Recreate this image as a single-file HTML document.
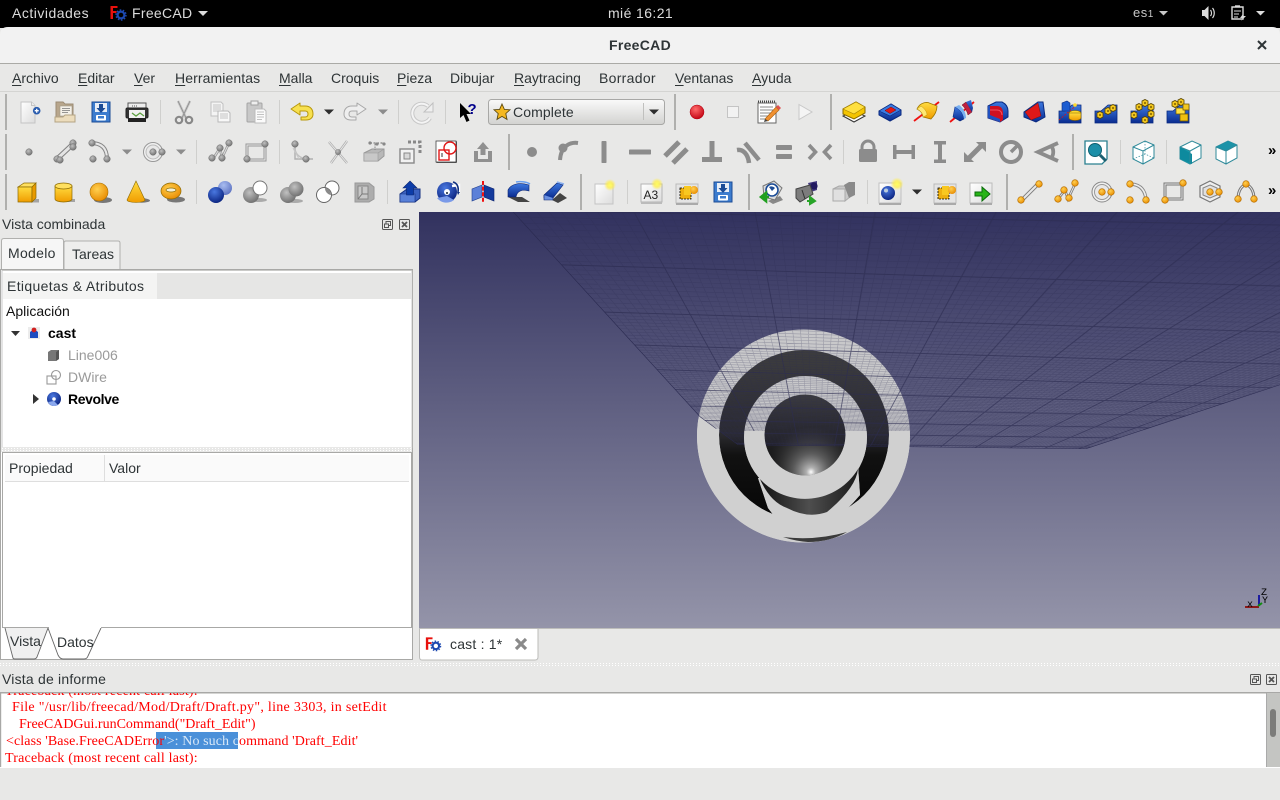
<!DOCTYPE html>
<html lang="es"><head><meta charset="utf-8"><title>FreeCAD</title>
<style>
html,body{margin:0;padding:0;width:1280px;height:800px;overflow:hidden;background:#e8e8e7}
body{position:relative;font-family:"Liberation Sans",sans-serif;font-size:14px;color:#2e3436}
svg#g{position:absolute;left:0;top:0}
.t{position:absolute;line-height:20px;white-space:nowrap}
.w{color:#dcdcdc}
.m u{text-decoration-thickness:1px;text-underline-offset:2px}
.r{position:absolute;font-family:"Liberation Serif",serif;font-size:14px;line-height:17px;color:#f00;white-space:pre}
.b{position:absolute}
</style></head><body>
<div class="b" style="left:0;top:692px;width:1266px;height:75px;background:#fff"></div>
<svg id="g" width="1280" height="800" viewBox="0 0 1280 800" xmlns="http://www.w3.org/2000/svg">
<defs>
<linearGradient id="bg" x1="0" y1="0" x2="0" y2="1"><stop offset="0" stop-color="#32325f"/><stop offset="1" stop-color="#9494a9"/></linearGradient>
<linearGradient id="au" x1="0" y1="0" x2="0" y2="1"><stop offset="0" stop-color="#ffdc40"/><stop offset="1" stop-color="#f09c00"/></linearGradient>
<linearGradient id="bl" x1="0" y1="0" x2="0" y2="1"><stop offset="0" stop-color="#3c78e0"/><stop offset="1" stop-color="#0a2c90"/></linearGradient>
<linearGradient id="pp" x1="0" y1="0" x2="1" y2="1"><stop offset="0" stop-color="#fff"/><stop offset="1" stop-color="#dcdcdc"/></linearGradient>
<radialGradient id="gb" cx=".4" cy=".35" r=".7"><stop offset="0" stop-color="#c0c0c0"/><stop offset="1" stop-color="#6c6c6c"/></radialGradient>
<radialGradient id="ob" cx=".4" cy=".35" r=".7"><stop offset="0" stop-color="#ffd050"/><stop offset="1" stop-color="#e88a00"/></radialGradient>
<radialGradient id="bb" cx=".4" cy=".3" r=".75"><stop offset="0" stop-color="#4a78e0"/><stop offset="1" stop-color="#08207c"/></radialGradient>
<radialGradient id="lb" cx=".4" cy=".3" r=".75"><stop offset="0" stop-color="#a8bcf0"/><stop offset="1" stop-color="#5a70c0"/></radialGradient>
<radialGradient id="rd" cx=".4" cy=".3" r=".75"><stop offset="0" stop-color="#ff6a6a"/><stop offset="1" stop-color="#c00010"/></radialGradient>
<radialGradient id="sg" cx=".5" cy=".5" r=".5"><stop offset="0" stop-color="#ffff60"/><stop offset=".5" stop-color="#ffee50" stop-opacity=".8"/><stop offset="1" stop-color="#ffee50" stop-opacity="0"/></radialGradient>
<radialGradient id="gs" gradientUnits="userSpaceOnUse" cx="811" cy="472" r="46"><stop offset="0" stop-color="#fff"/><stop offset=".1" stop-color="#ccc" stop-opacity=".85"/><stop offset=".4" stop-color="#888" stop-opacity=".6"/><stop offset="1" stop-color="#444" stop-opacity="0"/></radialGradient>
<linearGradient id="sp0" x1="0" y1="0" x2="0" y2="1"><stop offset="0" stop-color="#3c3c3e"/><stop offset=".5" stop-color="#262628"/><stop offset="1" stop-color="#0a0a0a"/></linearGradient>
<linearGradient id="sa" x1="0" y1="0" x2="0" y2="1"><stop offset="0" stop-color="#3e3e3e"/><stop offset=".5" stop-color="#2a2a2e"/><stop offset=".62" stop-color="#111"/><stop offset="1" stop-color="#060606"/></linearGradient>
<linearGradient id="cr" x1="0" y1="0" x2="1" y2="0"><stop offset="0" stop-color="#111"/><stop offset=".5" stop-color="#4e4e4e"/><stop offset="1" stop-color="#1a1a1a"/></linearGradient>
<linearGradient id="cb" x1="0" y1="0" x2="0" y2="1"><stop offset="0" stop-color="#fafafa"/><stop offset="1" stop-color="#d2d2d0"/></linearGradient>
<clipPath id="pl"><path d="M513,212L700,417L738,445L1086,449L1280,385V212Z"/></clipPath>
<clipPath id="lo"><path d="M690,412L708,428L743,431H915V550H690Z"/></clipPath>
<clipPath id="vp"><rect x="419" y="212" width="861" height="416"/></clipPath>

<!-- helpers -->
<circle id="b" r="3.3" fill="url(#gb)" stroke="#777" stroke-width=".5"/>
<circle id="o" r="3.3" fill="url(#ob)" stroke="#b06a00" stroke-width=".6"/>
<path id="dd" d="M-5,-2.5H5L0,2.5Z" fill="#2e2e2e"/>
<path id="dg" d="M-5,-2.5H5L0,2.5Z" fill="#8c8c8c"/>
<g id="fc"><path d="M-7.5,-7H-.5V-5H-5V-2H-1.5V0H-5V6H-7.5Z" fill="#e8100c"/><circle cx="3" cy="2" r="3.4" fill="none" stroke="#1c48b0" stroke-width="2.2"/><circle cx="3" cy="2" r="5" fill="none" stroke="#1c48b0" stroke-width="1.4" stroke-dasharray="1.6 1.55"/></g>

<!-- row1 -->
<g id="new"><path d="M-9,-10H1.5L5,-6.5V11H-9Z" fill="url(#pp)" stroke="#c4c4c4"/><path d="M1.5,-10V-6.5H5" fill="#eee" stroke="#c4c4c4"/><circle cx="6.7" cy="-1.3" r="3.8" fill="#2a5cae"/><path d="M4.7,-1.3H8.7M6.7,-3.3V.7" stroke="#fff" stroke-width="1.3"/></g>
<g id="open"><path d="M-9,-10H-2L0,-8H8V9H-9Z" fill="#b8a68c" stroke="#9c8c74"/><rect x="-5" y="-6" width="12" height="10" fill="#f4f0e8" stroke="#a09888" stroke-width=".6"/><path d="M-3,-3.5H5M-3,-1.5H5M-3,.5H3" stroke="#777" stroke-width=".8"/><path d="M-10,5H-2L0,3H10V10H-10Z" fill="#ecdcbc" stroke="#b4a484"/></g>
<g id="save"><path d="M-9,-10H9V10H-9Z" fill="#3c7cce" stroke="#1c4c96"/><rect x="-6" y="-9" width="12" height="9" fill="#e8eef6"/><path d="M-2,-8H2V-4H4.5L0,1L-4.5,-4H-2Z" fill="#1c4c96"/><rect x="-5" y="3" width="10" height="5.5" rx="1" fill="#fff"/><rect x="-3" y="4" width="6" height="2.5" fill="#3c7cce"/></g>
<g id="print"><rect x="-9" y="-9" width="18" height="6" fill="#eee" stroke="#555"/><path d="M-5,-6H1" stroke="#555" stroke-dasharray="1 1"/><rect x="-11" y="-4" width="22" height="10" rx="1.5" fill="#333" stroke="#222"/><rect x="-8" y="-2" width="16" height="8" fill="#f0f0f0"/><path d="M-5,1L-1,4L3,1L7,4" stroke="#5ca040" fill="none" stroke-width="1.3"/><rect x="-9" y="6" width="18" height="4" fill="#222"/></g>
<g id="cut" fill="none" stroke="#a6a6a6"><path d="M-6,-12L2,5M6,-12L-2,5" stroke-width="2.4" stroke="#c0c0c0"/><path d="M-6,-12L2,5M6,-12L-2,5" stroke-width=".6" stroke="#808080"/><circle cx="-5" cy="7" r="3.2" stroke-width="2.2" stroke="#888"/><circle cx="5" cy="7" r="3.2" stroke-width="2.2" stroke="#888"/></g>
<g id="copy"><path d="M-9,-10H1L3,-8V4H-9Z" fill="#f4f4f4" stroke="#c0c0c0"/><path d="M-7,-7H1M-7,-5H1M-7,-3H1M-7,-1H-1" stroke="#b4b4b4" stroke-width=".8"/><path d="M-2,-1H8L10,1V10H-2Z" fill="#f8f8f8" stroke="#b8b8b8"/><path d="M0,2H8M0,4H8M0,6H8" stroke="#b4b4b4" stroke-width=".8"/></g>
<g id="paste"><rect x="-9" y="-9" width="15" height="19" rx="1" fill="#c8c8c8" stroke="#a4a4a4"/><rect x="-5" y="-11" width="7" height="4" fill="#eee" stroke="#a0a0a0"/><path d="M-1,-3H8L10,-1V11H-1Z" fill="#fbfbfb" stroke="#bcbcbc"/><path d="M1,0H8M1,2.5H8M1,5H8M1,7.5H6" stroke="#b0b0b0" stroke-width=".8"/></g>
<path id="undo" d="M-11,-3L-2,-9V-6H3C9,-6 11,-2 11,2C11,6 8,8 4,8H-1V5H3C5,5 6,4 6,2C6,0 5,-1 3,-1H-2V3Z" fill="#f7e050" stroke="#b8980c" stroke-linejoin="round"/>
<path id="redo" d="M11,-3L2,-9V-6H-3C-9,-6 -11,-2 -11,2C-11,6 -8,8 -4,8H1V5H-3C-5,5 -6,4 -6,2C-6,0 -5,-1 -3,-1H2V3Z" fill="#eee" stroke="#a8a8a8" stroke-linejoin="round"/>
<g id="refresh"><path d="M8,5A9.5,9.5 0 1 1 6,-7" fill="none" stroke="#c8c8c8" stroke-width="4"/><path d="M8,5A9.5,9.5 0 1 1 6,-7" fill="none" stroke="#f4f4f4" stroke-width="2"/><path d="M2,-1H11V-10Z" fill="#efefef" stroke="#c0c0c0"/></g>
<g id="wt"><path d="M-9,-9V6L-5.5,3L-2.5,10L0.5,8.5L-2.5,2H2Z" fill="#000"/><text x="-1.5" y="2" font-family="Liberation Sans" font-weight="700" font-size="15" fill="#00008b">?</text></g>
<path id="star" d="M0,-8L2.4,-2.6L8,-2.2L3.8,1.6L5,7.4L0,4.4L-5,7.4L-3.8,1.6L-8,-2.2L-2.4,-2.6Z" fill="#f4b820" stroke="#5c4a10" stroke-width=".9"/>
<circle id="rec" r="7" fill="url(#rd)" stroke="#b00010" stroke-width=".5"/>
<rect id="stp" x="-5.5" y="-5.5" width="11" height="11" fill="#f2f2f2" stroke="#c4c4c4"/>
<g id="mac"><rect x="-10" y="-9" width="18" height="20" fill="#fff" stroke="#666"/><path d="M-10,-10.5H8" stroke="#444" stroke-width="2" stroke-dasharray="1 1"/><path d="M-8,-5H5M-8,-2H5M-8,1H4M-8,4H1M-8,7H-2" stroke="#888" stroke-width=".9"/><path d="M-3,7L8,-5L11,-2L0,9Z" fill="#f09030" stroke="#a86010" stroke-width=".6"/><path d="M8,-5L10,-7L13,-4L11,-2Z" fill="#e05050"/><path d="M-3,7L-4,10L0,9Z" fill="#444"/></g>
<path id="play" d="M-6,-7.5L7,0L-6,7.5Z" fill="#f4f4f4" stroke="#c8c8c8"/>

<!-- part design row 1 -->
<g id="pd1"><path d="M-11,4L0,10L11,4L0,-1Z" fill="#fff" stroke="#333"/><path d="M-11,-3L2,-10L11,-5V1L0,7L-11,2Z" fill="#f4c400" stroke="#8a6c00"/><path d="M-11,-3L0,2L11,-5L2,-10Z" fill="#ffe040" stroke="#a88400" stroke-width=".6"/></g>
<g id="pd2"><path d="M-11,-1L1,-8L11,-2V3L0,9L-11,3Z" fill="url(#bl)" stroke="#0a2a80"/><path d="M-11,-1L0,4L11,-2L1,-8Z" fill="#3a7ae0" stroke="#0a2a80" stroke-width=".6"/><path d="M-5,-1.5L1,-5L6,-2L0,1.5Z" fill="#e01818" stroke="#701010" stroke-width=".5"/></g>
<g id="pd3"><path d="M-12,9L13,-10" stroke="#f01010" stroke-width="1.8"/><path d="M-9,-3C-7,-8 -2,-10 2,-9.500L11,-6C11,-1 9,3 5,7L-3,5C-3,2 -5,-1 -9,-3Z" fill="url(#au)" stroke="#9c7400" stroke-width=".8"/><path d="M-9,-3C-5,-1 -3,2 -3,5L1,3C1,0 -1,-3 -5,-6Z" fill="#ffe874" stroke="#b08c00" stroke-width=".4"/></g>
<g id="pd4"><path d="M-12,10L12,-10" stroke="#f01010" stroke-width="1.8"/><path d="M-7,-5C-3,-3 1,0 2,7L-2,9L-9,5Z" fill="url(#bl)" stroke="#0a2a80" stroke-width=".6"/><path d="M-7,-5L-3,-7C1,-4 4,0 4,6L2,7C1,0 -3,-3 -7,-5Z" fill="#7ab0f0"/><path d="M0,-7C3,-4 5,-1 6,3L10,0C8,-4 6,-7 4,-10Z" fill="#c02040" stroke="#601020" stroke-width=".5"/><path d="M4,-10L9,-12L11,-4L10,0Z" fill="url(#bl)"/></g>
<g id="pd5"><path d="M-10,-6L-2,-10H4C8,-8 10,-5 10,-1V5L2,10L-10,6Z" fill="url(#bl)" stroke="#0a2a80"/><path d="M-10,-6H-1C3,-6 5,-3 5,1V8L2,10L-10,6Z" fill="#d01020"/><path d="M-10,-6V6L2,10V7L-8,3V-6Z" fill="#2050c0"/><path d="M-8,-2H-1C2,-2 4,0 4,3" stroke="#f05060" fill="none"/></g>
<g id="pd6"><path d="M-10,0L4,-10H9L11,5L2,10L-10,5Z" fill="url(#bl)" stroke="#0a2a80"/><path d="M-9,0L4,-9L7,4L-3,8Z" fill="#e01818" stroke="#801010" stroke-width=".5"/></g>
<g id="pdb"><path d="M-11,-1H-5L2,-7H11V11H-11Z" fill="url(#bl)" stroke="#0a2a80" stroke-width=".8"/></g>
<g id="nut"><path d="M-3,-2L0,-3.5L3,-2V2L0,3.5L-3,2Z" fill="#f4c820" stroke="#584400" stroke-width=".8"/><circle r="1" fill="#7c6000"/></g>
<g id="pd7"><use href="#pdb"/><path d="M-8,-1V-9L-3,-11L0,-9V-1Z" fill="#1c5cd0" stroke="#0a2a80" stroke-width=".6"/><ellipse cx="5" cy="1" rx="6" ry="2.5" fill="#ffd82c" stroke="#7a6000" stroke-width=".6"/><path d="M-1,1V6A6,2.5 0 0 0 11,6V1Z" fill="url(#au)" stroke="#7a6000" stroke-width=".6"/><path d="M-11,8L8,-8" stroke="#e01010" stroke-dasharray="2 1.5" stroke-width=".8"/><circle cx="5" cy="-7" r="1.8" fill="#ffd82c"/></g>
<g id="pd8"><use href="#pdb"/><use href="#nut" x="-6" y="3"/><use href="#nut" x="2" y="-1"/><use href="#nut" x="7" y="-4"/></g>
<g id="pd9"><use href="#pdb"/><use href="#nut" x="-8" y="3"/><use href="#nut" x="-3" y="-5"/><use href="#nut" x="3" y="-9"/><use href="#nut" x="9" y="-5"/><use href="#nut" x="9" y="2"/><use href="#nut" x="3" y="8"/></g>
<g id="pd10"><use href="#pdb"/><use href="#nut" x="-3" y="-8"/><use href="#nut" x="3" y="-10"/><path d="M-2,-4H7V2H-2Z" fill="#ffe040" stroke="#6c5400" stroke-width=".7"/><path d="M2,2H10V9H2Z" fill="#f0c010" stroke="#6c5400" stroke-width=".7"/><path d="M5,-8H11V-2H5Z" fill="#f4c820" stroke="#6c5400" stroke-width=".7"/></g>

<!-- sketcher gray -->
<g id="s1"><path d="M-8,7L7,-7" stroke="#808080" stroke-width="5"/><path d="M-8,7L7,-7" stroke="#e4e4e4" stroke-width="3"/><use href="#b" x="-8" y="7"/><use href="#b" x="8" y="-9"/><use href="#b" x="8" y="-5"/><use href="#b" x="-5" y="8"/></g>
<g id="s2"><path d="M-9,-9Q7,-9 7,7" fill="none" stroke="#888" stroke-width="4"/><path d="M-9,-9Q7,-9 7,7" fill="none" stroke="#e8e8e8" stroke-width="2"/><use href="#b" x="-8" y="-9"/><use href="#b" x="-7" y="7"/><use href="#b" x="7" y="7"/></g>
<g id="s3"><circle r="9.5" fill="#f0f0f0" stroke="#999"/><circle r="7" fill="#e8e8e8" stroke="#bbb"/><use href="#b" x="0" y="0"/><use href="#b" x="9" y="0"/></g>
<g id="s4"><path d="M-7,7L0,-4L2,6L9,-9" fill="none" stroke="#999" stroke-width="2.6"/><path d="M-7,7L0,-4L2,6L9,-9" fill="none" stroke="#ddd" stroke-width="1"/><use href="#b" x="-8" y="6"/><use href="#b" x="0" y="-4"/><use href="#b" x="2" y="6"/><use href="#b" x="9" y="-9"/></g>
<g id="s5"><rect x="-9" y="-7" width="18" height="15" fill="none" stroke="#999" stroke-width="3"/><rect x="-9" y="-7" width="18" height="15" fill="none" stroke="#e8e8e8" stroke-width="1"/><use href="#b" x="9" y="-8"/><use href="#b" x="-9" y="7"/></g>
<g id="s6"><path d="M-7,-9V7H11" fill="none" stroke="#b0b0b0" stroke-width="1.4"/><path d="M-7,-3Q-6,5 4,7" fill="none" stroke="#c0c0c0" stroke-width="1.4"/><use href="#b" x="-7" y="-8"/><use href="#b" x="4" y="7"/><path d="M-9,-4L-3,7" stroke="#c8c8c8"/></g>
<g id="s7"><path d="M-9,-10L9,11M9,-11L-7,11" stroke="#b0b0b0" stroke-width="2.4"/><path d="M-9,-10L9,11M9,-11L-7,11" stroke="#eee" stroke-width=".8"/><circle cy="0" r="3" fill="url(#gb)"/></g>
<g id="s8"><path d="M-10,1L-2,-3H10V4L4,9H-10Z" fill="#b8b8b8" stroke="#999"/><path d="M-10,1H4V9H-10ZM4,1L10,-3" fill="#c8c8c8" stroke="#999" stroke-width=".6"/><path d="M-4,-9H10" stroke="#666" stroke-width="1" stroke-dasharray="2 1.5"/><circle cx="-4" cy="-9" r="1.6" fill="#888"/><circle cx="3" cy="-8" r="1.6" fill="#888"/><circle cx="10" cy="-8" r="1.6" fill="#888"/><path d="M1,-8V-2" stroke="#888" stroke-dasharray="1.5 1"/></g>
<g id="s9"><rect x="-11" y="-3" width="14" height="14" fill="#f2f2f2" stroke="#888" stroke-width="1.4"/><rect x="-7" y="1" width="6" height="6" fill="#d8d8d8" stroke="#888"/><path d="M-3,-10H9V3" fill="none" stroke="#888" stroke-width="3" stroke-dasharray="3 2"/></g>
<g id="s10"><rect x="-11" y="-11" width="21" height="22" rx="1" fill="#555"/><rect x="-11" y="-11" width="20" height="21" fill="#fff" stroke="#444" stroke-width=".8"/><circle cx="3" cy="-4" r="6" fill="none" stroke="#e01818" stroke-width="1.4"/><rect x="-8" y="-2" width="10" height="10" fill="none" stroke="#e01818" stroke-width="1.4"/><path d="M-5,1V5" stroke="#999" stroke-width="2"/></g>
<path id="s11" d="M0,-10L6,-3H2.5V3H-2.5V-3H-6ZM-9,-1H-5V7H5V-1H9V10H-9Z" fill="#909090"/>
<!-- constraints -->
<circle id="c1" r="5" fill="#8c8c8c"/>
<g id="c2"><path d="M10,-9C3,-10 -7,-7 -8,8" fill="none" stroke="#8c8c8c" stroke-width="4"/><circle cx="-5" cy="-4" r="4.5" fill="#8c8c8c"/></g>
<rect id="c3" x="-2.5" y="-11" width="5" height="22" rx=".8" fill="#8c8c8c"/>
<rect id="c4" x="-11" y="-2.5" width="22" height="5" rx=".8" fill="#8c8c8c"/>
<g id="c5b" stroke="#8c8c8c" stroke-width="5"><path d="M-11,4L3,-10M-3,11L11,-3"/></g>
<path id="c6" d="M-2.5,-11H2.5V5H10V10H-10V5H-2.5Z" fill="#8c8c8c"/>
<g id="c7" fill="none" stroke="#8c8c8c" stroke-width="4.5"><path d="M-3,-9L11,8"/><path d="M-11,-2C-5,-3 0,2 1,11"/></g>
<g id="c8" fill="#8c8c8c"><rect x="-8" y="-7" width="16" height="5" rx="1"/><rect x="-8" y="2" width="16" height="5" rx="1"/></g>
<g id="c9" fill="none" stroke="#8c8c8c" stroke-width="3.6"><path d="M-11,-7L-4.500,0L-11,7M11,-7L4.500,0L11,7"/></g>
<g id="c10"><path d="M-6,-3V-5A6,6 0 0 1 6,-5V-3" fill="none" stroke="#8c8c8c" stroke-width="3"/><rect x="-9" y="-3" width="18" height="13" rx="1.5" fill="#8c8c8c"/></g>
<g id="c11" fill="#8c8c8c"><rect x="-11" y="-7" width="3.5" height="14"/><rect x="7.5" y="-7" width="3.5" height="14"/><rect x="-8" y="-2" width="16" height="4"/></g>
<g id="c12" fill="#8c8c8c"><rect x="-6" y="-11" width="12" height="3.5"/><rect x="-6" y="7.5" width="12" height="3.5"/><rect x="-2" y="-8" width="4" height="16"/></g>
<g id="c13"><path d="M-6,6L6,-6" stroke="#8c8c8c" stroke-width="5"/><path d="M11,-10V0L1,-10ZM-11,10V0L-1,10Z" fill="#8c8c8c"/></g>
<g id="c14"><circle r="10" fill="none" stroke="#8c8c8c" stroke-width="4"/><path d="M0,0L6,-6" stroke="#8c8c8c" stroke-width="3.5"/></g>
<g id="c15" fill="none" stroke="#8c8c8c" stroke-width="3.8"><path d="M11,-9L-9,0L11,9"/><path d="M4,-6C7,-3 7,3 4,6"/></g>
<!-- draft view / teal -->
<g id="v1"><path d="M-11,-11H11V7L6,12H-11Z" fill="#fff" stroke="#2a8090" stroke-width="1.3"/><circle cx="-1" cy="-2" r="6.5" fill="#1c8fa8" stroke="#106070"/><path d="M4,3L10,9" stroke="#1c6070" stroke-width="3"/></g>
<g id="wc" fill="none" stroke="#2f8a9a"><path d="M-10,-5L2,-11L11,-7V6L0,12L-10,7Z" fill="#fff"/><path d="M-10,-5L0,-1L11,-7M0,-1V12" /><path d="M2,-11V2M-10,7L2,2L11,6" stroke-dasharray="1.5 1.5" stroke-width=".7"/></g>
<g id="v3"><path d="M-10,-5L2,-11L11,-7V6L0,12L-10,7Z" fill="#fff" stroke="#2f8a9a"/><path d="M-10,-5L0,-1V12L-10,7Z" fill="#149cae"/><path d="M-10,-5L2,2V12L-10,7Z" fill="#0e8a9e"/><path d="M0,-1L11,-7M0,-1V12" stroke="#2f8a9a" fill="none"/><path d="M-10,-5L0,-1" stroke="#2f8a9a"/></g>
<g id="v4"><path d="M-10,-5L2,-11L11,-7V6L0,12L-10,7Z" fill="#fff" stroke="#2f8a9a"/><path d="M-10,-5L2,-11L11,-7L0,-1Z" fill="#1c93a8"/><path d="M0,-1V12M0,-1L11,-7M-10,-5L0,-1" stroke="#2f8a9a" fill="none"/></g>
<!-- row 3 -->
<g id="p1"><rect x="-5" y="7" width="16" height="3.5" fill="#888" opacity=".7"/><path d="M-10,-5L-4,-9H8L4,-5Z" fill="#ffe060" stroke="#8c6a00" stroke-width=".7"/><path d="M-10,-5H4V10H-10Z" fill="url(#au)" stroke="#8c6a00" stroke-width=".7"/><path d="M4,-5L8,-9V6L4,10Z" fill="#e89a00" stroke="#8c6a00" stroke-width=".7"/></g>
<g id="p2"><rect x="-1" y="7" width="12" height="3" fill="#888" opacity=".7"/><path d="M-9,-6V7A8.5,3 0 0 0 8,7V-6Z" fill="url(#au)" stroke="#8c6a00" stroke-width=".7"/><ellipse cx="-.5" cy="-6" rx="8.5" ry="3" fill="#ffe060" stroke="#8c6a00" stroke-width=".7"/></g>
<g id="p3"><ellipse cx="3" cy="8" rx="9" ry="3" fill="#777"/><circle cx="-1" r="9" fill="url(#ob)" stroke="#a87000" stroke-width=".6"/></g>
<g id="p4"><ellipse cx="6" cy="8.5" rx="8" ry="2.2" fill="#777"/><path d="M0,-11L9,8A9,2.5 0 0 1 -9,8Z" fill="url(#au)" stroke="#8c6a00" stroke-width=".6"/></g>
<g id="p5"><ellipse cx="4" cy="7.5" rx="9" ry="3" fill="#777"/><ellipse cx="-1" cy="-1" rx="10" ry="8" fill="url(#ob)" stroke="#8c6a00" stroke-width=".7"/><ellipse cx="-1" cy="-2" rx="5" ry="2" fill="#f4f0d8" stroke="#8c6a00" stroke-width=".7"/></g>
<g id="q1"><circle cx="5" cy="-4" r="7" fill="url(#lb)"/><circle cx="-4" cy="3" r="8" fill="url(#bb)"/></g>
<g id="q2"><ellipse cx="3" cy="8" rx="8" ry="2" fill="#aaa"/><circle cx="-5" cy="3" r="8" fill="url(#gb)"/><circle cx="4" cy="-4" r="7" fill="#fff" stroke="#777"/></g>
<g id="q3"><ellipse cx="3" cy="9" rx="8" ry="2" fill="#aaa"/><circle cx="-4" cy="3" r="8" fill="url(#gb)"/><circle cx="4" cy="-3" r="7.5" fill="url(#gb)"/></g>
<g id="q4"><circle cx="4" cy="-4" r="7" fill="#fff" stroke="#666"/><circle cx="-4" cy="3" r="7.5" fill="#fff" stroke="#666"/><path d="M-3,-4A7,7 0 0 1 3,3 7,7 0 0 1 -3,-4Z" fill="#8a8a8a"/></g>
<g id="q5"><path d="M-9,-9L5,-9L10,-5V7L5,10H-9Z" fill="#adadad" stroke="#999"/><rect x="-6" y="-6" width="10" height="13" fill="#c8c8c8" stroke="#888"/><path d="M-2,-5V2H4M-2,2L-6,7" stroke="#777" fill="none"/></g>
<g id="e1"><path d="M-10,2L-3,-3H10V6L5,10H-10Z" fill="#3c62c0" stroke="#143080"/><path d="M-10,2H5V10H-10Z" fill="#5880d8" stroke="#143080" stroke-width=".6"/><path d="M0,-11L7,-4H3.5V3H-3.5V-4H-7Z" fill="#0c3ca8" stroke="#082470" stroke-width=".6"/></g>
<g id="e2"><circle r="10" fill="url(#bb)"/><path d="M-10,6A12,12 0 0 0 7,8L0,4Z" fill="#7a9ae8"/><circle cx="0" cy="0" r="3" fill="#fff"/><circle cx="0" cy="1" r="1" fill="#123"/><path d="M5,-6L12,-7V2" fill="none" stroke="#fff" stroke-width="2.4"/><path d="M6,-10C10,-9 12,-5 11,0" fill="none" stroke="#103080" stroke-width="1.6"/><path d="M10,0H13L11,3Z" fill="#103080"/></g>
<g id="e3"><path d="M-1,-7L-11,-3V9L-1,5Z" fill="#5c80d8" stroke="#204090" stroke-width=".6"/><path d="M1,-7L11,-3V9L1,5Z" fill="#143a9c" stroke="#0c2470" stroke-width=".6"/><path d="M0,-11V11" stroke="#f01010" stroke-width="2" stroke-dasharray="4 1.6"/></g>
<g id="e4"><path d="M-11,5L3,5L11,10H-1Z" fill="#444"/><path d="M-11,-2C-8,-8 0,-10 10,-7V-1C3,-3 -2,-1 -3,5H-11Z" fill="url(#bl)" stroke="#0c2470" stroke-width=".6"/><path d="M-3,-10C2,-11 8,-10 11,-8" stroke="#6aa0f0" fill="none" stroke-width="1.5"/></g>
<g id="e5"><path d="M-3,8L5,1L12,6L3,11Z" fill="#444"/><path d="M-11,3L2,-9L8,-7L-2,6H-11Z" fill="url(#bl)" stroke="#0c2470" stroke-width=".6"/><path d="M2,-10L9,-8" stroke="#8ab0f0" stroke-width="1.5"/><path d="M-11,3V8H-2V6" fill="#6a90e0" stroke="#0c2470" stroke-width=".6"/></g>
<g id="k1"><rect x="-9" y="-8" width="18" height="20" fill="url(#pp)" stroke="#c4c4c4"/><circle cx="6" cy="-7" r="6" fill="url(#sg)"/></g>
<g id="k2"><rect x="-10" y="-8" width="21" height="18" fill="url(#pp)" stroke="#b4b4b4"/><rect x="-10" y="10" width="21" height="2" fill="#bbb"/><text x="-7.5" y="7" font-family="Liberation Sans" font-size="12" fill="#222">A3</text><circle cx="6" cy="-8" r="6" fill="url(#sg)"/></g>
<g id="k3"><rect x="-11" y="-8" width="22" height="19" fill="#e4e4e4" stroke="#bbb"/><rect x="-11" y="11" width="22" height="2" fill="#aaa"/><rect x="-7" y="-4" width="11" height="11" fill="#eeb010" stroke="#000" stroke-dasharray="2 1" stroke-width=".8"/><rect x="-3" y="-6" width="7" height="9" fill="#f8c820"/><circle cx="7" cy="-2" r="4" fill="url(#ob)"/></g>
<g id="k5"><path d="M-3,9L9,4L12,8L2,12Z" fill="#888"/><path d="M-8,-6L3,-11L11,-4L4,8L-7,5Z" fill="#dcdcdc" stroke="#777"/><circle cx="1" cy="-2" r="6" fill="#fff" stroke="#1c4c96" stroke-width="1.6"/><path d="M-2,-5A5,5 0 0 1 4,-4L1,-1Z" fill="#1c4c96"/><path d="M-2,5H-9M-10,5L-5,1V9Z" stroke="#20a020" stroke-width="2.6" fill="#20a020"/></g>
<g id="k6"><path d="M1,-9L10,-11V-2L4,0Z" fill="#443a80"/><circle cx="7" cy="-6" r="3.6" fill="#221a60"/><path d="M-11,-3L3,-7L6,2L-7,10L-11,6Z" fill="#7c7c7c" stroke="#444"/><path d="M-5,-2L-2,7" stroke="#333"/><path d="M0,9H8M8,9L3,5V12Z" stroke="#28a428" stroke-width="2" fill="#28a428"/></g>
<g id="k7"><path d="M-11,-3H1V9H-11Z" fill="#e0e0e0" stroke="#aaa"/><path d="M-11,-3L-5,-6H6V5L1,9V-3Z" fill="#c8c8c8" stroke="#aaa"/><path d="M0,-7L5,-10H11V3L5,6Z" fill="#8a8a8a"/></g>
<g id="k8"><rect x="-11" y="-9" width="22" height="20" fill="url(#pp)" stroke="#c0c0c0"/><rect x="-11" y="11" width="22" height="2" fill="#aaa"/><circle cx="-2" cy="1" r="7" fill="url(#bb)"/><circle cx="-4" cy="-1.5" r="2" fill="#bcd"/><circle cx="7" cy="-8" r="6.5" fill="url(#sg)"/></g>
<g id="k9"><rect x="-11" y="-9" width="22" height="20" fill="url(#pp)" stroke="#bbb"/><rect x="-11" y="11" width="22" height="2" fill="#aaa"/><path d="M-6,0H1V-5L9,2L1,9V4H-6Z" fill="#28b418" stroke="#0a6c0a"/></g>
<!-- draft orange -->
<g id="d1"><path d="M-8,8L7,-7" stroke="#7c7c7c" stroke-width="4"/><path d="M-8,8L7,-7" stroke="#e8e8e8" stroke-width="2"/><use href="#o" x="-9" y="8"/><use href="#o" x="9" y="-8"/></g>
<g id="d2"><path d="M-8,7L-1,-2L2,7L9,-8" fill="none" stroke="#777" stroke-width="2.6"/><path d="M-8,7L-1,-2L2,7L9,-8" fill="none" stroke="#e4e4e4"/><use href="#o" x="-8" y="7"/><use href="#o" x="-2" y="-2"/><use href="#o" x="3" y="6"/><use href="#o" x="9" y="-9"/></g>
<g id="d3"><circle r="10" fill="#f0f0f0" stroke="#888"/><circle r="7.5" fill="#e8e8e8" stroke="#999"/><use href="#o" x="0" y="0"/><use href="#o" x="9" y="0"/></g>
<g id="d4"><path d="M-7,-8Q7,-7 8,8" fill="none" stroke="#888" stroke-width="3.4"/><path d="M-7,-8Q7,-7 8,8" fill="none" stroke="#eee" stroke-width="1.6"/><use href="#o" x="-8" y="-8"/><use href="#o" x="-8" y="8"/><use href="#o" x="8" y="8"/></g>
<g id="d5"><rect x="-9" y="-8" width="17" height="15" fill="none" stroke="#777" stroke-width="3"/><rect x="-9" y="-8" width="17" height="15" fill="none" stroke="#e8e8e8"/><use href="#o" x="9" y="-9"/><use href="#o" x="-9" y="8"/></g>
<g id="d6"><path d="M0,-11L10,-6L10,5L0,10L-10,5V-6Z" fill="#eee" stroke="#777" stroke-width="1.2"/><path d="M0,-7L7,-4V3L0,6L-7,3V-4Z" fill="#e0e0e0" stroke="#888"/><use href="#o" x="0" y="0"/><use href="#o" x="9" y="0"/></g>
<g id="d7"><path d="M-8,7C-8,-3 -3,-7 0,-7C3,-7 8,-3 8,7" fill="none" stroke="#777" stroke-width="3"/><path d="M-8,7C-8,-3 -3,-7 0,-7C3,-7 8,-3 8,7" fill="none" stroke="#e8e8e8"/><use href="#o" x="-8" y="7"/><use href="#o" x="0" y="-8"/><use href="#o" x="8" y="7"/></g>
<g id="fl" fill="none" stroke="#555"><rect x=".5" y=".5" width="10" height="10" rx="1"/><rect x="4" y="2.5" width="4.5" height="4"/><rect x="2.5" y="5" width="4" height="3.5" fill="#e8e8e7"/></g>
<g id="cl" fill="none" stroke="#555"><rect x=".5" y=".5" width="10" height="10" rx="1"/><path d="M3,3L8,8M8,3L3,8" stroke-width="1.8"/></g>
<g id="sp"><path d="M-5,-3V3H-2.5L1.5,7V-7L-2.5,-3Z" fill="#dcdcdc"/><path d="M3.5,-3A5,5 0 0 1 3.5,3M5.5,-5A8,8 0 0 1 5.5,5" fill="none" stroke="#dcdcdc" stroke-width="1.2"/></g>
</defs>

<!-- top bar -->
<rect width="1280" height="28" fill="#000"/>
<path d="M0,63V35Q0,27 8,27H1272Q1280,27 1280,35V63Z" fill="#f2f2f2"/>
<rect y="63" width="1280" height="1" fill="#aaaaa6"/>
<use href="#fc" x="118" y="13"/>
<path d="M198,11H208L203,16Z" fill="#dcdcdc"/>
<path d="M1159,11H1168L1163.5,15.5Z" fill="#c8c8c8"/>
<use href="#sp" x="1207" y="13"/>
<g fill="none" stroke="#dcdcdc" stroke-width="1.4"><path d="M1232,7H1243V19H1232Z"/><path d="M1235,6H1240"/><path d="M1234,11H1241M1234,14H1239M1234,17H1238" stroke-width="1"/></g><path d="M1243,14L1240,18H1243L1241,21L1246,16H1243Z" fill="#dcdcdc"/>
<path d="M1256,11H1265L1260.5,15.5Z" fill="#dcdcdc"/>
<path d="M1258,41L1266,49M1266,41L1258,49" stroke="#2e3436" stroke-width="2"/>

<!-- menu / toolbars frame -->
<rect y="91" width="1280" height="1" fill="#d4d4d2"/>
<g fill="#b0b0ae"><rect x="5" y="94" width="2" height="36"/><rect x="5" y="134" width="2" height="36"/><rect x="5" y="174" width="2" height="36"/></g>
<g fill="#cfcfcd"><rect x="160" y="100" width="1" height="24"/><rect x="279" y="100" width="1" height="24"/><rect x="398" y="100" width="1" height="24"/><rect x="445" y="100" width="1" height="24"/>
<rect x="196" y="140" width="1" height="24"/><rect x="279" y="140" width="1" height="24"/><rect x="843" y="140" width="1" height="24"/><rect x="1120" y="140" width="1" height="24"/><rect x="1166" y="140" width="1" height="24"/>
<rect x="196" y="180" width="1" height="24"/><rect x="387" y="180" width="1" height="24"/><rect x="627" y="180" width="1" height="24"/><rect x="867" y="180" width="1" height="24"/></g>
<g fill="#b0b0ae"><rect x="674" y="94" width="2" height="36"/><rect x="830" y="94" width="2" height="36"/><rect x="508" y="134" width="2" height="36"/><rect x="1072" y="134" width="2" height="36"/><rect x="580" y="174" width="2" height="36"/><rect x="748" y="174" width="2" height="36"/><rect x="1006" y="174" width="2" height="36"/></g>

<!-- row 1 -->
<use href="#new" x="30" y="112"/><use href="#open" x="65" y="112"/><use href="#save" x="101" y="112"/><use href="#print" x="137" y="112"/>
<use href="#cut" x="184" y="113"/><use href="#copy" x="220" y="112"/><use href="#paste" x="256" y="112"/>
<use href="#undo" x="302" y="112"/><use href="#dd" x="329" y="112"/><use href="#redo" x="355" y="112"/><use href="#dg" x="383" y="112"/><use href="#refresh" x="422" y="113"/><use href="#wt" x="469" y="112"/>
<rect x="488.5" y="99.5" width="176" height="25" rx="3" fill="url(#cb)" stroke="#a8a8a6"/><rect x="643" y="103" width="1" height="17" fill="#c0c0be"/><use href="#dd" x="654" y="112"/><use href="#star" x="502" y="112"/>
<use href="#rec" x="697" y="112"/><use href="#stp" x="733" y="112"/><use href="#mac" x="768" y="112"/><use href="#play" x="805" y="112"/>
<use href="#pd1" x="854" y="112"/><use href="#pd2" x="890" y="112"/><use href="#pd3" x="926" y="112"/><use href="#pd4" x="962" y="112"/><use href="#pd5" x="998" y="112"/><use href="#pd6" x="1034" y="112"/><use href="#pd7" x="1070" y="112"/><use href="#pd8" x="1106" y="112"/><use href="#pd9" x="1142" y="112"/><use href="#pd10" x="1178" y="112"/>

<!-- row 2 -->
<use href="#b" x="29" y="152"/><use href="#s1" x="65" y="152"/><use href="#s2" x="100" y="152"/><use href="#dg" x="127" y="152"/><use href="#s3" x="153" y="152"/><use href="#dg" x="181" y="152"/>
<use href="#s4" x="220" y="152"/><use href="#s5" x="256" y="152"/><use href="#s6" x="302" y="152"/><use href="#s7" x="338" y="152"/><use href="#s8" x="374" y="152"/><use href="#s9" x="411" y="152"/><use href="#s10" x="447" y="152"/><use href="#s11" x="483" y="152"/>
<use href="#c1" x="532" y="152"/><use href="#c2" x="568" y="152"/><use href="#c3" x="604" y="152"/><use href="#c4" x="640" y="152"/><use href="#c5b" x="676" y="152"/><use href="#c6" x="712" y="152"/><use href="#c7" x="748" y="152"/><use href="#c8" x="784" y="152"/><use href="#c9" x="820" y="152"/>
<use href="#c10" x="868" y="152"/><use href="#c11" x="904" y="152"/><use href="#c12" x="940" y="152"/><use href="#c13" x="975" y="152"/><use href="#c14" x="1011" y="152"/><use href="#c15" x="1047" y="152"/>
<use href="#v1" x="1096" y="152"/><use href="#wc" x="1143" y="152"/><use href="#v3" x="1190" y="152"/><use href="#v4" x="1226" y="152"/>

<!-- row 3 -->
<use href="#p1" x="28" y="192"/><use href="#p2" x="64" y="192"/><use href="#p3" x="100" y="192"/><use href="#p4" x="136" y="192"/><use href="#p5" x="172" y="192"/>
<use href="#q1" x="220" y="192"/><use href="#q2" x="256" y="192"/><use href="#q3" x="292" y="192"/><use href="#q4" x="328" y="192"/><use href="#q5" x="364" y="192"/>
<use href="#e1" x="410" y="192"/><use href="#e2" x="447" y="192"/><use href="#e3" x="483" y="192"/><use href="#e4" x="519" y="192"/><use href="#e5" x="555" y="192"/>
<use href="#k1" x="604" y="192"/><use href="#k2" x="651" y="192"/><use href="#k3" x="687" y="192"/><use href="#save" x="723" y="192"/>
<use href="#k5" x="771" y="192"/><use href="#k6" x="807" y="192"/><use href="#k7" x="844" y="192"/><use href="#k8" x="890" y="192"/><use href="#dd" x="917" y="192"/><use href="#k3" x="945" y="192"/><use href="#k9" x="981" y="192"/>
<use href="#d1" x="1030" y="192"/><use href="#d2" x="1066" y="192"/><use href="#d3" x="1102" y="192"/><use href="#d4" x="1138" y="192"/><use href="#d5" x="1174" y="192"/><use href="#d6" x="1210" y="192"/><use href="#d7" x="1246" y="192"/>

<!-- 3D view -->
<rect x="419" y="212" width="861" height="416" fill="url(#bg)"/>
<g clip-path="url(#vp)">
<circle cx="803.5" cy="436" r="106.5" fill="#d0d0d0"/>
<circle cx="804" cy="435" r="85" fill="url(#sa)"/>
<path d="M758,478L768,508Q805,560 860,495L858,466L805,480Z" fill="#d0d0d0"/>
<circle cx="805.5" cy="437.5" r="61.5" fill="#d0d0d0"/>
<circle cx="805" cy="435" r="40.5" fill="url(#sp0)"/>
<circle cx="805" cy="435" r="40.5" fill="url(#gs)"/>
<g clip-path="url(#pl)">
<rect x="419" y="212" width="861" height="240" fill="#3a3a6a" opacity=".05"/>
<g id="mn" stroke="#2e2e52" stroke-width=".6" opacity=".3" fill="none"></g>
<g stroke="#2e2e52" stroke-width=".9" opacity=".6" fill="none">
<path d="M513,212L729,449M634,212L764,449M755,212L799,449M875,212L834,449M996,212L869,449M1117,212L903,449M1238,212L938,449M1359,212L973,449M1480,212L1008,449M1601,212L1043,449M1722,212L1078,449"/>
<path d="M500,263L1280,286M500,309L1280,332M500,341L1280,364M500,365L1280,388M500,385L1280,405M500,402L1280,418M500,417L1280,430M500,430L1280,440M500,441L1280,449M500,210L1280,225"/>
</g>
<path d="M513,212L700,417L738,445L1086,449L1280,385" fill="none" stroke="#2a2a50" stroke-width="1"/>
</g>
<g clip-path="url(#lo)">
<path fill-rule="evenodd" d="M697,436a106.5,106.5 0 1 0 213,0a106.5,106.5 0 1 0 -213,0ZM719,435a85,85 0 1 0 170,0a85,85 0 1 0 -170,0Z" fill="#d0d0d0"/>
<path d="M758,478L768,508Q805,560 860,495L858,466L805,480Z" fill="#d0d0d0"/>
<path fill-rule="evenodd" d="M744,437.5a61.5,61.5 0 1 0 123,0a61.5,61.5 0 1 0 -123,0ZM764.5,435a40.5,40.5 0 1 0 81,0a40.5,40.5 0 1 0 -81,0Z" fill="#d0d0d0"/>
</g>
<path d="M760,479A61.5,61.5 0 0 0 858,469Q856,488 827,512Q808,519 787,508Q770,502 760,479Z" fill="url(#cr)"/>
<path d="M783,537Q815,541 847,532Q830,542 808,542Q795,541 783,537Z" fill="#3a3a3a"/>
<!-- gizmo -->
<path d="M1245,607H1259" stroke="#8c1818" stroke-width="2"/><path d="M1259,595V606" stroke="#1c1ca0" stroke-width="2"/><path d="M1258,606L1262,603" stroke="#108c10" stroke-width="2"/>
<g font-family="Liberation Mono" font-size="10" fill="#000"><text x="1247" y="607">x</text><text x="1261" y="595">Z</text><text x="1262" y="603">Y</text></g>
</g>

<!-- left dock -->
<use href="#fl" x="382" y="219"/><use href="#cl" x="399" y="219"/>
<path d="M1.5,270V241Q1.5,238.500 4,238.500H61Q63.500,238.500 63.500,241V270" fill="#f6f6f6" stroke="#b0b0ae"/>
<path d="M64,270V243Q64,241 66,241H118Q120,241 120,243V269" fill="#eeeeed" stroke="#b0b0ae"/>
<rect x="0.500" y="269.500" width="412" height="390" fill="#fff" stroke="#a8a8a6"/>
<rect x="2" y="270.500" width="410" height="177" fill="#fff" stroke="#bdbdbb" stroke-width=".8"/>
<rect x="3" y="273" width="408" height="26" fill="#e6e6e5"/><rect x="3" y="273" width="154" height="26" fill="#f4f4f3"/>
<rect x="1" y="447" width="411" height="5" fill="#e8e8e7"/>
<path d="M2,448.500H412M2,450.500H412" stroke="#fff" stroke-width="1" stroke-dasharray="1 2"/>
<rect x="2.500" y="452.500" width="409" height="175" fill="#fff" stroke="#a8a8a6"/>
<rect x="5" y="455" width="404" height="26" fill="#fafafa"/><rect x="5" y="481" width="404" height="1" fill="#dedede"/><rect x="104" y="455" width="1" height="26" fill="#dedede"/>
<path d="M11,331H20L15.500,336Z" fill="#333"/>
<path d="M33,394L39,399L33,404Z" fill="#333"/>
<g transform="translate(34,333)"><rect x="-6" y="-6" width="12" height="12" fill="#ececec"/><path d="M-4,-1L0,-4L4,-1V5H-4Z" fill="#1c4cc0"/><circle cx="0" cy="-3" r="2.4" fill="#d02020"/></g>
<g transform="translate(54,355)"><path d="M-6,-3L-3,-5H5V4L2,6H-6Z" fill="#777"/><path d="M2,-3V6L5,4V-5Z" fill="#555"/></g>
<g transform="translate(54,377)" fill="none" stroke="#999" stroke-width="1.1"><rect x="-7" y="-1" width="9" height="8"/><circle cx="2" cy="-2" r="4.5"/></g>
<g transform="translate(54,399)"><circle r="7" fill="url(#bb)"/><path d="M-6,3A7,7 0 0 0 4,6L0,2Z" fill="#8aa8ee"/><circle r="1.8" fill="#fff"/></g>

<path d="M5,628L13,658Q13,659 15,659H34Q36,659 37,657L48,628" fill="#f0f0f0" stroke="#666" stroke-width=".9"/>
<path d="M48,628L58,655Q60,659 63,659H84Q87,659 88,656L101,628" fill="#fff" stroke="#666" stroke-width=".9" style="stroke-linejoin:round"/>
<rect x="49" y="626" width="52" height="2" fill="#fff"/>

<!-- view tab -->
<path d="M419.500,628V657Q419.500,660 422,660H535Q538,660 538,657V628" fill="#fff" stroke="#bcbcba"/>
<use href="#fc" transform="translate(433,644) scale(.95)"/>
<path d="M516,639L526,649M526,639L516,649" stroke="#8a8a8a" stroke-width="3.2"/>
<rect x="419" y="628" width="861" height="1" fill="#bdbdbb"/>
<path d="M0,663.500H1280M0,665.500H1280" stroke="#fff" stroke-width="1" stroke-dasharray="1 2"/>

<!-- report -->
<use href="#fl" x="1250" y="674"/><use href="#cl" x="1266" y="674"/>
<rect y="692" width="1280" height="1.500" fill="#a8a8a6"/>
<rect x="0" y="693" width="1.200" height="74" fill="#a8a8a6"/>
<rect x="156" y="732" width="82" height="17" fill="#4a90d9"/>
<rect x="1266" y="693" width="14" height="75" fill="#c4c5c2"/><rect x="1266" y="693" width="1" height="75" fill="#aaa"/>
<rect x="1270" y="709" width="6" height="28" rx="3" fill="#7c7c7a"/>
<rect y="767" width="1280" height="1" fill="#fff"/>
</svg>

<script>
(function(){var g=document.getElementById('mn'),d='',i,j,k,x;
var ys=[210,272,318,350,374,393,409,422,434,445],sl=[.019,.03,.03,.03,.03,.026,.021,.016,.013,.01];
for(k=0;k<110;k++){x=513+12.1*k;d+='M'+x.toFixed(1)+',212L'+(x+(817-x)*.712).toFixed(1)+',449';}
for(i=0;i<ys.length-1;i++){for(j=0;j<10;j++){var f=j/10,y=ys[i]+(ys[i+1]-ys[i])*f,s=sl[i];d+='M500,'+(y-300*s).toFixed(1)+'L1280,'+(y+480*s).toFixed(1);}}
var p=document.createElementNS('http://www.w3.org/2000/svg','path');p.setAttribute('d',d);g.appendChild(p);})();
</script>

<div class="t w" style="left:12px;top:3px;letter-spacing:.5px">Actividades</div>
<div class="t w" style="left:132px;top:3px;letter-spacing:.3px">FreeCAD</div>
<div class="t w" style="left:608px;top:3px;letter-spacing:.4px">mié 16:21</div>
<div class="t" style="left:1133px;top:3px;color:#c8c8c8;font-size:13px;letter-spacing:.5px">es<span style="font-size:10px">1</span></div>
<div class="t" style="left:609px;top:35px;font-weight:700;letter-spacing:.3px">FreeCAD</div>

<div class="m">
<div class="t" style="left:12px;top:68px"><u>A</u>rchivo</div>
<div class="t" style="left:78px;top:68px"><u>E</u>ditar</div>
<div class="t" style="left:134px;top:68px"><u>V</u>er</div>
<div class="t" style="left:175px;top:68px;letter-spacing:.1px"><u>H</u>erramientas</div>
<div class="t" style="left:279px;top:68px"><u>M</u>alla</div>
<div class="t" style="left:331px;top:68px">Croquis</div>
<div class="t" style="left:397px;top:68px"><u>P</u>ieza</div>
<div class="t" style="left:450px;top:68px">Dibujar</div>
<div class="t" style="left:514px;top:68px"><u>R</u>aytracing</div>
<div class="t" style="left:599px;top:68px;letter-spacing:.3px">Borrador</div>
<div class="t" style="left:675px;top:68px"><u>V</u>entanas</div>
<div class="t" style="left:752px;top:68px"><u>A</u>yuda</div>
</div>

<div class="t" style="left:513px;top:102px;letter-spacing:.1px">Complete</div>
<div class="t" style="left:1268px;top:141px;color:#000;font-size:15px;font-weight:700">»</div>
<div class="t" style="left:1268px;top:181px;color:#000;font-size:15px;font-weight:700">»</div>

<div class="t" style="left:2px;top:214px">Vista combinada</div>
<div class="t" style="left:8px;top:243px;letter-spacing:.3px">Modelo</div>
<div class="t" style="left:72px;top:244px">Tareas</div>
<div class="t" style="left:7px;top:276px;letter-spacing:.35px">Etiquetas &amp; Atributos</div>
<div class="t" style="left:6px;top:301px;color:#111">Aplicación</div>
<div class="t" style="left:48px;top:323px;color:#000;font-weight:700">cast</div>
<div class="t" style="left:68px;top:345px;color:#9a9a9a">Line006</div>
<div class="t" style="left:68px;top:367px;color:#9a9a9a">DWire</div>
<div class="t" style="left:68px;top:389px;color:#000;font-weight:700;letter-spacing:-.4px">Revolve</div>
<div class="t" style="left:9px;top:458px">Propiedad</div>
<div class="t" style="left:109px;top:458px">Valor</div>
<div class="t" style="left:10px;top:631px">Vista</div>
<div class="t" style="left:57px;top:632px">Datos</div>
<div class="t" style="left:450px;top:634px;letter-spacing:.2px">cast : 1*</div>
<div class="t" style="left:2px;top:669px;letter-spacing:.2px">Vista de informe</div>

<div style="position:absolute;left:1px;top:693px;width:1265px;height:74px;overflow:hidden">
<div class="r" style="left:4px;top:-10px;letter-spacing:.2px">Traceback (most recent call last):</div>
<div class="r" style="left:11px;top:6px;letter-spacing:.29px">File "/usr/lib/freecad/Mod/Draft/Draft.py", line 3303, in setEdit</div>
<div class="r" style="left:18px;top:23px">FreeCADGui.runCommand("Draft_Edit")</div>
<div class="r" style="left:5px;top:40px;letter-spacing:.09px">&lt;class 'Base.FreeCADError<span style="color:#d8e8f8">'&gt;: No such c</span>ommand 'Draft_Edit'</div>
<div class="r" style="left:4px;top:57px;letter-spacing:.2px">Traceback (most recent call last):</div>
</div>
</body></html>
